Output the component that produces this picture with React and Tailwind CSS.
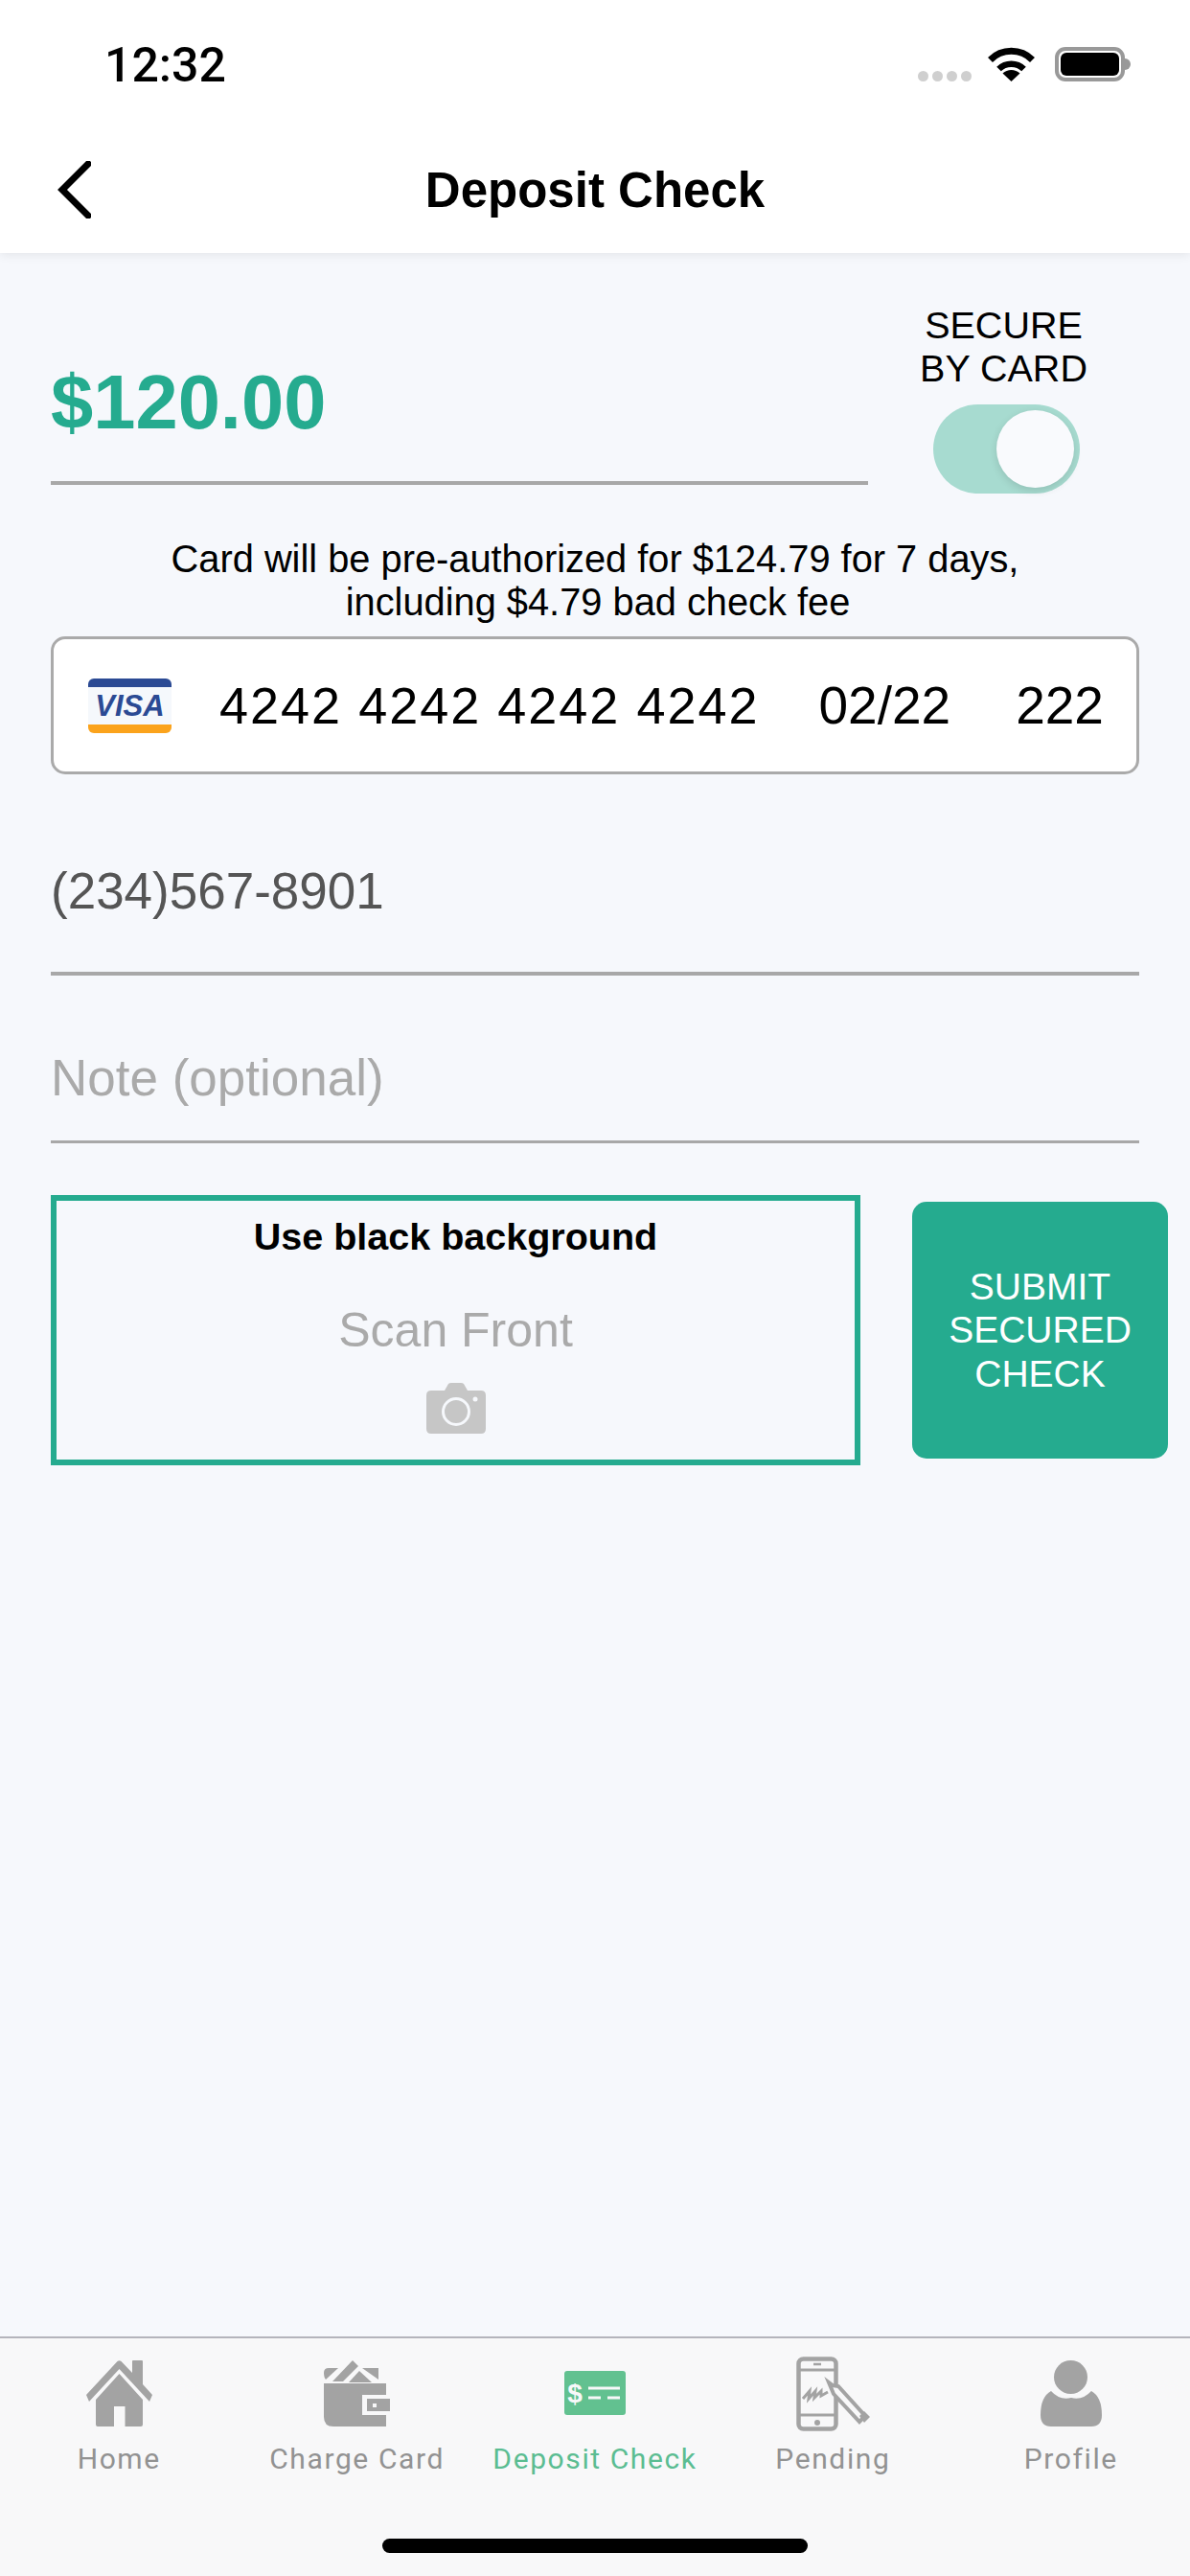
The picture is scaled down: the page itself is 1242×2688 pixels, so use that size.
const HomeIcon = () => (
  <svg width="69" height="69" viewBox="0 0 69 69" fill="#a3a3a3">
    <path d="M32.5 1 Q34.5 -0.5 36.5 1 L48 13 V0.5 Q48 0 49 0 H58 Q59 0 59 1 V25 L69 36 L66 43 L34.5 9 L3 43 L0 36 Z" />
    <path d="M34.5 14 L59 41 V67 Q59 69 57 69 H40.5 V48 H29 V69 H12 Q10 69 10 67 V41 Z" />
  </svg>
);

const WalletIcon = () => (
  <svg width="69" height="69" viewBox="0 0 69 69" fill="#a3a3a3">
    <path d="M0 24 H65 V36 H40 V57 H65 V69 H10 Q0 69 0 59 Z" />
    <path d="M45 40 H69 V53 H45 Z M51 45 V49 H55 V45 Z" fillRule="evenodd" />
    <path d="M5 8 H15 L2 20 Q0 18 0 13 Q0 8 5 8 Z" />
    <path d="M9 22 L30 0 L36 6 L20 22 Z" />
    <path d="M26 23 L37 11 L50 23 Z" />
    <path d="M40 8 H57 V20 Z" />
  </svg>
);

const DepositIcon = () => (
  <svg width="64" height="46" viewBox="0 0 64 46">
    <rect width="64" height="46" rx="3" fill="#62c190" />
    <text x="11" y="33" fontSize="28" fontWeight="700" fill="#f8f8f9" textAnchor="middle" fontFamily="'Liberation Sans', sans-serif">$</text>
    <path d="M25 18 H58" stroke="#f8f8f9" strokeWidth="3" />
    <path d="M25 28 H38 M45 28 H58" stroke="#f8f8f9" strokeWidth="3" />
  </svg>
);

const PendingIcon = () => (
  <svg width="77" height="78" viewBox="0 0 77 78" fill="none" stroke="#a3a3a3">
    <rect x="2.500" y="2.500" width="39" height="73" rx="5" strokeWidth="4.500" />
    <path d="M3 14 H41 M3 61 H41" strokeWidth="3" />
    <path d="M18 8 H26" strokeWidth="2.500" />
    <circle cx="22" cy="69" r="3" fill="#a3a3a3" stroke="none" />
    <path d="M7 44 L14 36 L13 44 L20 36 L19 43 L26 36 L26 41 L33 37" strokeWidth="3" />
    <path d="M34 27 L38 30 L44 31 L72 62 L66 68 L39 39 Z" strokeWidth="4" fill="#f8f8f9" />
    <path d="M66 62 L71 57 L77 63 L71 69 Z" fill="#a3a3a3" stroke="none" />
  </svg>
);

const ProfileIcon = () => (
  <svg width="64" height="69" viewBox="0 0 64 69" fill="#a3a3a3">
    <ellipse cx="31.500" cy="17.500" rx="17.500" ry="17.500" />
    <path d="M11 32 Q20 42 32 39 Q44 42 53 32 Q64 38 64 57 Q64 69 53 69 H11 Q0 69 0 57 Q0 38 11 32 Z" />
  </svg>
);

const CameraIcon = () => (
  <svg width="62" height="53" viewBox="0 0 62 53">
    <path d="M5 8 H19 L23 1 Q24 0 26 0 H36 Q38 0 39 1 L43 8 H57 Q62 8 62 13 V48 Q62 53 57 53 H5 Q0 53 0 48 V13 Q0 8 5 8 Z" fill="#c6c6c6" />
    <circle cx="31" cy="30" r="13.500" fill="none" stroke="#f6f8fc" strokeWidth="3" />
    <circle cx="51" cy="17" r="2.500" fill="#f6f8fc" />
  </svg>
);

const WifiIcon = () => (
  <svg width="49" height="36" viewBox="0 0 49 36" fill="none" stroke="#000">
    <path d="M2.500 13.500 A 31 31 0 0 1 46.500 13.500" strokeWidth="7" />
    <path d="M11.500 23 A 18.500 18.500 0 0 1 37.500 23" strokeWidth="6.500" />
    <path d="M24.500 36 L15.500 27.500 A 13 13 0 0 1 33.500 27.500 Z" fill="#000" stroke="none" />
  </svg>
);

const BackIcon = () => (
  <svg width="35" height="60" viewBox="0 0 35 60" fill="none" stroke="#000" strokeWidth="7" strokeLinecap="square" strokeLinejoin="miter">
    <path d="M32 3 L5 30 L32 57" />
  </svg>
);

const tabs = [
  { label: "Home", icon: <HomeIcon />, pad: "pt-[23px]" },
  { label: "Charge Card", icon: <WalletIcon />, pad: "pt-[23px]" },
  { label: "Deposit Check", icon: <DepositIcon />, pad: "pt-[34px]", active: true },
  { label: "Pending", icon: <PendingIcon />, pad: "pt-[19px]" },
  { label: "Profile", icon: <ProfileIcon />, pad: "pt-[23px]" },
];

export default function App() {
  return (
    <div className="flex h-[2688px] w-[1242px] flex-col overflow-hidden bg-[#f6f8fc] font-['Liberation_Sans',sans-serif] text-black">
      <header className="relative z-10 h-[264px] bg-white shadow-[0_2px_10px_rgba(0,0,0,0.08)]">
        <div className="flex h-[169px] items-start justify-between pl-[109px] pr-[62px]">
          <span className="mt-[40px] font-['Roboto',sans-serif] text-[50px] font-medium leading-[56px]">12:32</span>
          <div className="mt-[49px] flex items-start">
            <div className="mt-[25px] flex gap-[4px]">
              <span className="h-[11px] w-[11px] rounded-full bg-[#cfcfcf]" />
              <span className="h-[11px] w-[11px] rounded-full bg-[#cfcfcf]" />
              <span className="h-[11px] w-[11px] rounded-full bg-[#cfcfcf]" />
              <span className="h-[11px] w-[11px] rounded-full bg-[#cfcfcf]" />
            </div>
            <div className="ml-[17px]"><WifiIcon /></div>
            <div className="ml-[21px] flex items-center">
              <div className="h-[36px] w-[73px] rounded-[11px] border-[4px] border-[#999] p-[2px]">
                <div className="h-full w-full rounded-[6px] bg-black" />
              </div>
              <div className="h-[12px] w-[6px] rounded-r-full bg-[#999]" />
            </div>
          </div>
        </div>
        <div className="grid grid-cols-[1fr_auto_1fr] items-center pl-[60px]">
          <div className="mt-[-2px]"><BackIcon /></div>
          <h1 className="pr-[60px] text-[51px] font-bold leading-[60px]">Deposit Check</h1>
          <div />
        </div>
      </header>

      <main className="flex-1 px-[53px]">
        <div className="flex h-[297px]">
          <div className="flex h-[242px] w-[853px] shrink-0 items-end border-b-4 border-[#a8a8a8] pb-[36px]">
            <span className="text-[79.500px] font-bold leading-[92px] text-[#25ab8f]">$120.00</span>
          </div>
          <div className="ml-[54px] flex w-[175px] shrink-0 flex-col items-center pt-[53px]">
            <div className="whitespace-nowrap text-center text-[39.500px] leading-[45px]">
              <div>SECURE</div>
              <div>BY CARD</div>
            </div>
            <div className="relative ml-[6px] mt-[15px] h-[93px] w-[153px] rounded-full bg-[#a7dbd0]">
              <div className="absolute left-[66px] top-[6px] h-[81px] w-[81px] rounded-full bg-[#f9fafd] shadow-[0_3px_8px_rgba(0,0,0,0.12)]" />
            </div>
          </div>
        </div>

        <p className="h-[91px] text-center text-[39.800px] leading-[45px]">
          Card will be pre-authorized for $124.79 for 7 days,
          <br />
          <span className="pl-[6px]">including $4.79 bad check fee</span>
        </p>

        <div className="mt-[12px] flex h-[144px] w-[1136px] items-center rounded-[15px] border-[3px] border-[#aaa] bg-white pl-[36px] text-[54px] tracking-[2px]">
          <div className="flex h-[57px] w-[87px] shrink-0 flex-col overflow-hidden rounded-[6px] bg-[#f5f8fc]">
            <div className="h-[9px] bg-[#2b4a94]" />
            <div className="flex flex-1 items-center justify-center text-[31px] font-bold italic leading-none tracking-normal text-[#2b4a94]">VISA</div>
            <div className="h-[9px] bg-[#fba31c]" />
          </div>
          <span className="ml-[50px] whitespace-nowrap">4242 4242 4242 4242</span>
          <span className="ml-[62px] whitespace-nowrap text-[55px] tracking-normal">02/22</span>
          <span className="ml-[68px] whitespace-nowrap text-[55px] tracking-normal">222</span>
        </div>

        <div className="flex h-[210px] w-[1136px] items-end border-b-4 border-[#a8a8a8] pb-[54px] text-[53px] leading-[60px] text-[#555]">
          (234)567-8901
        </div>
        <div className="flex h-[175px] w-[1136px] items-end border-b-[3px] border-[#a8a8a8] pb-[35px] text-[53px] leading-[60px] text-[#aaa]">
          Note (optional)
        </div>

        <div className="mt-[54px] flex items-start">
          <div className="flex h-[282px] w-[845px] shrink-0 flex-col items-center border-[6px] border-[#25ab8f] pt-[15px]">
            <div className="text-[39.500px] font-bold leading-[45px]">Use black background</div>
            <div className="mt-[46px] text-[50px] leading-[58px] text-[#aaa]">Scan Front</div>
            <div className="mt-[26px]"><CameraIcon /></div>
          </div>
          <button className="ml-[54px] mt-[7px] flex h-[268px] w-[267px] shrink-0 items-center justify-center rounded-[15px] bg-[#25ab8f] text-center text-[39px] leading-[45.500px] text-white">
            SUBMIT
            <br />
            SECURED
            <br />
            CHECK
          </button>
        </div>
      </main>

      <footer className="relative h-[250px] border-t-2 border-[#b4b4bc] bg-[#f8f8f9]">
        <div className="grid h-[150px] grid-cols-5">
          {tabs.map((t) => (
            <div key={t.label} className="relative flex flex-col items-center">
              <div className={`flex h-[108px] items-start ${t.pad}`}>{t.icon}</div>
              <span className={`whitespace-nowrap font-['Roboto',sans-serif] text-[30px] leading-[36px] tracking-[1.600px] ${t.active ? "text-[#5bbd92]" : "text-[#929292]"}`}>
                {t.label}
              </span>
            </div>
          ))}
        </div>
        <div className="absolute bottom-[24px] left-[399px] h-[15px] w-[444px] rounded-full bg-black" />
      </footer>
    </div>
  );
}
